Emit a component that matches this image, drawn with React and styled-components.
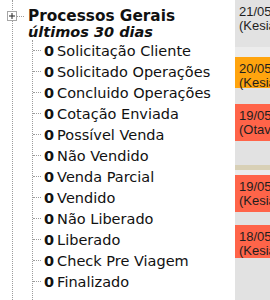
import React from 'react';
import styled, { createGlobalStyle } from 'styled-components';

const GlobalStyle = createGlobalStyle`
  html, body {
    margin: 0;
    padding: 0;
    background: #fff;
  }
  body {
    font-family: "DejaVu Sans", Verdana, sans-serif;
    color: #111;
    overflow: hidden;
  }
`;

const Layout = styled.div`
  display: flex;
  width: 270px;
  height: 300px;
  overflow: hidden;
`;

const TreePane = styled.div`
  width: 235px;
  flex: none;
  padding-left: 12px;
  box-sizing: border-box;
  overflow: hidden;
`;

const Root = styled.div`
  height: 100%;
  border-left: 1px dotted #9c9c9c;
  padding-top: 8px;
  box-sizing: border-box;
`;

const Header = styled.div`
  display: flex;
  align-items: center;
  height: 16px;
`;

const Toggle = styled.span`
  width: 10px;
  height: 10px;
  margin-left: -6px;
  flex: none;
  display: flex;
  align-items: center;
  justify-content: center;
  background: #fff;
  border: 1px solid #a6a6a6;
  box-sizing: border-box;
  svg {
    display: block;
  }
`;

const Dash = styled.span`
  width: ${p => p.$w}px;
  flex: none;
  border-top: 1px dotted #9c9c9c;
  margin-right: ${p => p.$gap}px;
`;

const Title = styled.span`
  font-size: 15.3px;
  font-weight: bold;
  white-space: nowrap;
`;

const Subtitle = styled.div`
  margin-left: 15px;
  font-size: 14.5px;
  font-weight: bold;
  font-style: italic;
  line-height: 16px;
  white-space: nowrap;
`;

const Children = styled.div`
  margin-left: 19px;
  border-left: 1px dotted #9c9c9c;
  height: 100%;
`;

const Item = styled.div`
  display: flex;
  align-items: center;
  height: 21px;
  font-size: 14.5px;
  white-space: nowrap;
`;

const Count = styled.b`
  margin-right: 3px;
`;

const Timeline = styled.div`
  flex: 1;
  min-width: 0;
  background: #e2e2e2;
  font-family: "Liberation Sans", Arial, sans-serif;
  font-size: 13px;
  line-height: 14px;
  color: #1e1e1e;
  white-space: nowrap;
  overflow: hidden;
`;

const tones = {
  grey: '#e2e2e2',
  light: '#ececec',
  tan: '#d8d0b6',
  orange: '#ffa40e',
  red: '#ff6449',
};

const Entry = styled.div`
  height: ${p => p.$h}px;
  background: ${p => tones[p.$tone]};
  padding: 5px 0 0 4px;
  box-sizing: border-box;
`;

const items = [
  'Solicitação Cliente',
  'Solicitado Operações',
  'Concluido Operações',
  'Cotação Enviada',
  'Possível Venda',
  'Não Vendido',
  'Venda Parcial',
  'Vendido',
  'Não Liberado',
  'Liberado',
  'Check Pre Viagem',
  'Finalizado',
];

const entries = [
  { tone: 'grey', h: 47, date: '21/05/2015', who: '(Kesia)' },
  { tone: 'light', h: 10 },
  { tone: 'orange', h: 31, date: '20/05/2015', who: '(Kesia)' },
  { tone: 'grey', h: 16 },
  { tone: 'red', h: 37, date: '19/05/2015', who: '(Otavio)' },
  { tone: 'grey', h: 24 },
  { tone: 'tan', h: 5 },
  { tone: 'light', h: 5 },
  { tone: 'red', h: 37, date: '19/05/2015', who: '(Kesia)' },
  { tone: 'grey', h: 13 },
  { tone: 'red', h: 33, date: '18/05/2015', who: '(Kesia)' },
  { tone: 'grey', h: 60 },
];

function PlusIcon() {
  return (
    <svg width="6" height="6" viewBox="0 0 6 6">
      <path d="M0 3h6M3 0v6" stroke="#222" strokeWidth="1" />
    </svg>
  );
}

export default function App() {
  return (
    <Layout>
      <GlobalStyle />
      <TreePane>
        <Root>
          <Header>
            <Toggle><PlusIcon /></Toggle>
            <Dash $w={7} $gap={4} />
            <Title>Processos Gerais</Title>
          </Header>
          <Subtitle>últimos 30 dias</Subtitle>
          <Children>
            {items.map(label => (
              <Item key={label}>
                <Dash $w={8} $gap={3} />
                <Count>0</Count>
                {label}
              </Item>
            ))}
          </Children>
        </Root>
      </TreePane>
      <Timeline>
        {entries.map((e, i) => (
          <Entry key={i} $tone={e.tone} $h={e.h}>
            {e.date && <div>{e.date}</div>}
            {e.who && <div>{e.who}</div>}
          </Entry>
        ))}
      </Timeline>
    </Layout>
  );
}
